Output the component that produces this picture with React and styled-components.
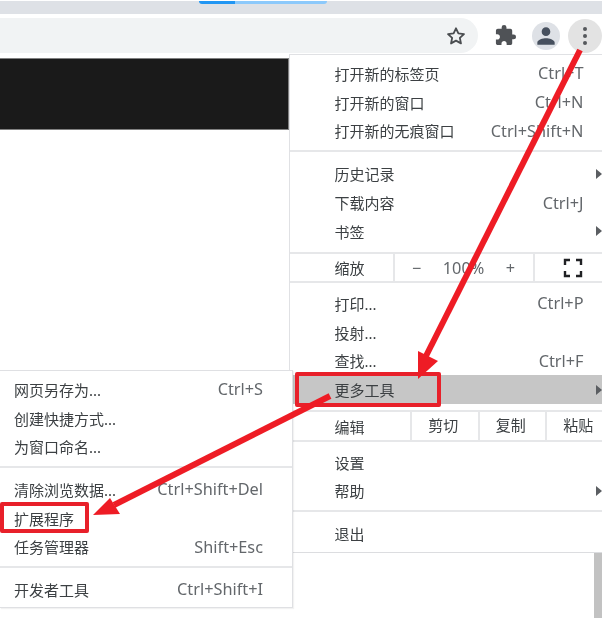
import React from 'react';
import styled, { createGlobalStyle } from 'styled-components';
import { MdExtension, MdPerson } from 'react-icons/md';

const GlobalStyle = createGlobalStyle`
  html, body {
    margin: 0;
    padding: 0;
    background: #fff;
  }
  body {
    width: 609px;
    height: 618px;
    overflow: hidden;
    font-family: "Noto Sans", "Noto Sans CJK SC", sans-serif;
  }
`;

const mainSections = [
  {
    pad: '4px 0 5px',
    rows: [
      { label: '打开新的标签页', keys: 'Ctrl+T' },
      { label: '打开新的窗口', keys: 'Ctrl+N' },
      { label: '打开新的无痕窗口', keys: 'Ctrl+Shift+N' },
    ],
  },
  {
    pad: '7px 0 6px',
    rows: [
      { label: '历史记录', more: true },
      { label: '下载内容', keys: 'Ctrl+J' },
      { label: '书签', more: true },
    ],
  },
];

const toolSections = [
  {
    pad: '5.7px 0 6px',
    rows: [
      { label: '打印...', keys: 'Ctrl+P' },
      { label: '投射...' },
      { label: '查找...', keys: 'Ctrl+F' },
      { label: '更多工具', more: true, active: true },
    ],
  },
];

const endSections = [
  {
    pad: '5.5px 0 5px',
    rows: [{ label: '设置' }, { label: '帮助', more: true }],
  },
  {
    pad: '6.4px 0 3px',
    rows: [{ label: '退出' }],
  },
];

const subSections = [
  {
    pad: '4px 0 5px',
    rows: [
      { label: '网页另存为...', keys: 'Ctrl+S' },
      { label: '创建快捷方式...' },
      { label: '为窗口命名...' },
    ],
  },
  {
    pad: '6.6px 0 5px',
    rows: [
      { label: '清除浏览数据...', keys: 'Ctrl+Shift+Del' },
      { label: '扩展程序' },
      { label: '任务管理器', keys: 'Shift+Esc' },
    ],
  },
  {
    pad: '6.6px 0 2px',
    rows: [{ label: '开发者工具', keys: 'Ctrl+Shift+I' }],
  },
];

function MenuSections({ sections, compact }) {
  return sections.map((section) => (
    <Section key={section.rows[0].label} $pad={section.pad}>
      {section.rows.map((row) => (
        <Row key={row.label} $active={row.active} $compact={compact}>
          <span>{row.label}</span>
          {row.keys && <Keys>{row.keys}</Keys>}
          {row.more && <MoreArrow />}
        </Row>
      ))}
    </Section>
  ));
}

function App() {
  return (
    <Page>
      <GlobalStyle />
      <Screen>
        <TabStrip>
          <ActiveTab />
        </TabStrip>
        <Toolbar>
          <Omnibox>
            <svg width="22" height="22" viewBox="0 0 24 24" fill="none" stroke="#4a4d50" strokeWidth="2" strokeLinejoin="round">
              <path d="M12 3.6l2.6 5.6 6.1.7-4.5 4.2 1.2 6-5.4-3-5.4 3 1.2-6-4.5-4.2 6.1-.7z" />
            </svg>
          </Omnibox>
          <ToolIcons>
            <ToolIcon>
              <MdExtension size={23} color="#4f5256" />
            </ToolIcon>
            <ToolIcon $bg="#dee1e6">
              <MdPerson size={26} color="#47505e" />
            </ToolIcon>
            <ToolIcon $bg="#e3e3e3">
              <Dots>
                <i />
                <i />
                <i />
              </Dots>
            </ToolIcon>
          </ToolIcons>
        </Toolbar>
        <Banner />
        <Scrollbar />

        <MainMenu>
          <MenuSections sections={mainSections} />
          <SplitRow>
            <SplitLabel>缩放</SplitLabel>
            <ZoomControls>
              <span>−</span>
              <span>100%</span>
              <span>+</span>
            </ZoomControls>
            <FullscreenCell>
              <svg width="20" height="20" viewBox="0 0 20 20" fill="none" stroke="#202124" strokeWidth="2.4">
                <path d="M2 7V2h5M13 2h5v5M18 13v5h-5M7 18H2v-5" />
              </svg>
            </FullscreenCell>
          </SplitRow>
          <MenuSections sections={toolSections} />
          <SplitRow $tall>
            <SplitLabel $wide>编辑</SplitLabel>
            <EditCell>剪切</EditCell>
            <EditCell>复制</EditCell>
            <EditCell>粘贴</EditCell>
          </SplitRow>
          <MenuSections sections={endSections} />
        </MainMenu>

        <SubMenu>
          <MenuSections sections={subSections} compact />
        </SubMenu>

        <RedBox $left={295} $top={372} $width={146} $height={35} />
        <RedBox $left={0} $top={502} $width={89} $height={31} />

        <Arrows viewBox="0 0 609 618">
          <path d="M580 50L426 356" stroke="#ee1c25" strokeWidth="6" fill="none" />
          <path d="M418 379L418 351L438 361z" fill="#ee1c25" />
          <path d="M330 396L114 505" stroke="#ee1c25" strokeWidth="6" fill="none" />
          <path d="M93 515L110 498L120 514z" fill="#ee1c25" />
        </Arrows>
      </Screen>
    </Page>
  );
}

const Page = styled.div`
  width: 609px;
  height: 618px;
  overflow: hidden;
  background: #fff;
`;

const Screen = styled.div`
  position: relative;
  width: 602px;
  height: 618px;
  overflow: hidden;
  background: #fff;
  filter: blur(0.35px);
`;

const TabStrip = styled.div`
  height: 13px;
  margin-top: 1px;
  background: #dee1e6;
`;

const ActiveTab = styled.div`
  width: 128px;
  height: 3px;
  margin-left: 199px;
  border-radius: 0 0 3px 3px;
  background: linear-gradient(90deg, #2196f3 0 28%, #8cc9fb 28% 100%);
`;

const Toolbar = styled.div`
  display: flex;
  align-items: center;
  height: 35px;
  margin-top: 4px;
`;

const Omnibox = styled.div`
  display: flex;
  align-items: center;
  justify-content: flex-end;
  box-sizing: border-box;
  flex-shrink: 0;
  width: 478px;
  height: 35px;
  padding-right: 11px;
  border-radius: 0 18px 18px 0;
  background: #f1f3f4;
`;

const ToolIcons = styled.div`
  display: flex;
  align-items: center;
  margin-left: 13px;
  gap: 12.5px;
`;

const ToolIcon = styled.div`
  display: flex;
  align-items: center;
  justify-content: center;
  width: 28px;
  height: 28px;
  border-radius: 50%;
  background: ${(p) => p.$bg || 'transparent'};

  &:last-child {
    width: 34px;
    height: 34px;
    margin-left: -4px;
  }
`;

const Dots = styled.div`
  display: flex;
  flex-direction: column;
  gap: 3px;

  i {
    display: block;
    width: 4px;
    height: 4px;
    border-radius: 50%;
    background: #55585c;
  }
`;

const Banner = styled.div`
  box-sizing: border-box;
  width: 289px;
  height: 72px;
  margin-top: 5px;
  border: 1px solid #808080;
  border-left: 0;
  background: #1a1a1a;
`;

const Scrollbar = styled.div`
  position: absolute;
  top: 552px;
  right: 0;
  width: 8px;
  height: 66px;
  background: #c2c2c2;
`;

const Menu = styled.div`
  position: absolute;
  box-sizing: border-box;
  background: #fff;
  color: #3c4043;
  font-size: 15px;
`;

const MainMenu = styled(Menu)`
  top: 54px;
  left: 289px;
  width: 313px;
  height: 499px;
  border-left: 1px solid #e0e1e4;
  border-top: 1px solid #e0e1e4;
  border-bottom: 1px solid #dcdde0;
`;

const SubMenu = styled(Menu)`
  top: 370px;
  left: 0;
  width: 293px;
  height: 238px;
  border: 1px solid #dfe0e3;
  border-left: 0;
  box-shadow: 1px 1px 1px rgba(0, 0, 0, 0.05);
`;

const Section = styled.div`
  padding: ${(p) => p.$pad};
  border-bottom: 2px solid #e6e7e9;

  &:last-child {
    border-bottom: 0;
  }
`;

const Row = styled.div`
  position: relative;
  display: flex;
  align-items: center;
  justify-content: space-between;
  height: 28.8px;
  padding: ${(p) => (p.$compact ? '0 29px 0 14px' : '0 18.5px 0 44.5px')};
  background: ${(p) => (p.$active ? '#c6c6c6' : 'transparent')};
  white-space: nowrap;
`;

const Keys = styled.span`
  color: #63676b;
  font-size: 16.3px;
`;

const MoreArrow = styled.i`
  position: absolute;
  right: 0;
  top: 50%;
  width: 0;
  height: 0;
  margin-top: -5px;
  border-left: 6px solid #5b5e62;
  border-top: 5px solid transparent;
  border-bottom: 5px solid transparent;
`;

const SplitRow = styled.div`
  display: flex;
  align-items: stretch;
  height: ${(p) => (p.$tall ? '28px' : '27.5px')};
  border-bottom: 2px solid #e6e7e9;
`;

const SplitLabel = styled.div`
  display: flex;
  align-items: center;
  box-sizing: border-box;
  flex-shrink: 0;
  width: ${(p) => (p.$wide ? '120px' : '103px')};
  padding-left: 44.5px;
`;

const ZoomControls = styled.div`
  display: flex;
  align-items: center;
  justify-content: space-between;
  box-sizing: border-box;
  flex-shrink: 0;
  width: 142px;
  padding: 0 18px 0 17px;
  border-left: 2px solid #e6e7e9;
  border-right: 2px solid #e6e7e9;
  color: #63676b;
  font-size: 16.3px;
`;

const FullscreenCell = styled.div`
  display: flex;
  align-items: center;
  justify-content: center;
  box-sizing: border-box;
  flex-shrink: 0;
  width: 67px;
  padding-left: 9px;
`;

const EditCell = styled.div`
  display: flex;
  align-items: center;
  justify-content: center;
  box-sizing: border-box;
  flex-shrink: 0;
  width: 67.5px;
  padding: 0 3px 3px 0;
  border-left: 2px solid #e6e7e9;
`;

const RedBox = styled.div`
  position: absolute;
  box-sizing: border-box;
  left: ${(p) => p.$left}px;
  top: ${(p) => p.$top}px;
  width: ${(p) => p.$width}px;
  height: ${(p) => p.$height}px;
  border: 4px solid #e8202a;
  border-radius: 2px;
`;

const Arrows = styled.svg`
  position: absolute;
  top: 0;
  left: 0;
  width: 609px;
  height: 618px;
  pointer-events: none;
`;

export default App;
